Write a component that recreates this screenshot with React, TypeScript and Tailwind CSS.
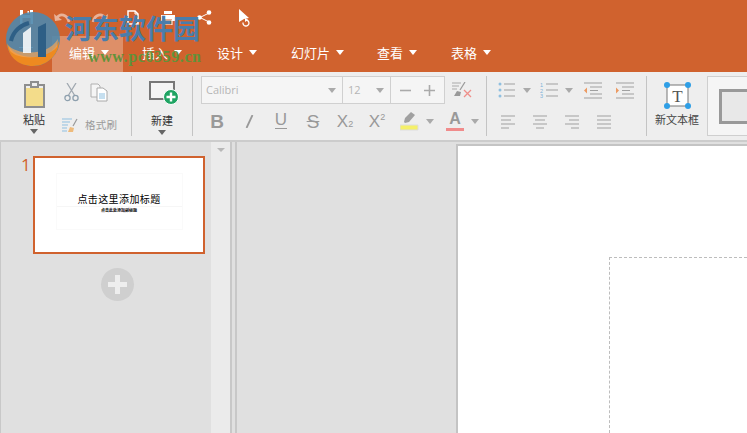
const cjk = "font-['Noto_Sans_CJK_SC','Noto_Sans',sans-serif]";

function Tri({ c = "#fff", w = 8, h = 5, className = "" }: { c?: string; w?: number; h?: number; className?: string }) {
  return (
    <svg width={w} height={h} viewBox="0 0 8 5" className={"block shrink-0 " + className} preserveAspectRatio="none">
      <path d="M0 0H8L4 5Z" fill={c} />
    </svg>
  );
}

function Tab({ label, active = false, w }: { label: string; active?: boolean; w: string }) {
  return (
    <div className={`flex h-[36px] items-center pb-[4px] ${w} ${active ? "bg-[#de8f68]" : ""}`}>
      <span className={`${cjk} text-[13px] leading-none text-white`}>{label}</span>
      <Tri className="ml-[6px]" />
    </div>
  );
}

function Sep() {
  return <div className="my-[4px] h-[60px] w-[1px] shrink-0 bg-[#c4c4c4]" />;
}

function QuickIcons() {
  return (
    <div className="flex h-[36px] items-start pl-[19px] pt-[9px]">
      <svg width="15" height="16" viewBox="0 0 15 16" className="shrink-0"><path d="M1 1h13v14H1z" fill="#fff" /><path d="M4 1h7v5H4z" fill="#d0622e" /><path d="M8.5 2h1.5v3H8.5z" fill="#fff" /><path d="M3.5 9h8v6h-8z" fill="#d0622e" /></svg>
      <svg width="17" height="15" viewBox="0 0 17 15" className="ml-[20px] mt-[3px] shrink-0"><path d="M3 6 C6 1 13 2 15 10" fill="none" stroke="#e9b298" strokeWidth="2.6" /><path d="M0 2 L1 9 L8 8Z" fill="#e9b298" /></svg>
      <svg width="17" height="15" viewBox="0 0 17 15" className="ml-[20px] mt-[3px] shrink-0"><path d="M14 6 C11 1 4 2 2 10" fill="none" stroke="#e9b298" strokeWidth="2.6" /><path d="M17 2 L16 9 L9 8Z" fill="#e9b298" /></svg>
      <svg width="12" height="15" viewBox="0 0 12 15" className="ml-[19px] mt-[1px] shrink-0"><path d="M1 1h7l3 3v10H1z" fill="none" stroke="#fff" strokeWidth="1.5" /><path d="M8 1v3h3" fill="none" stroke="#fff" /></svg>
      <svg width="14" height="14" viewBox="0 0 14 14" className="ml-[22px] mt-[2px] shrink-0"><path d="M3 0h8v3H3z" fill="#fff" /><path d="M0 4h14v6h-3V8H3v2H0z" fill="#fff" /><path d="M3 9h8v5H3z" fill="none" stroke="#fff" /></svg>
      <svg width="15" height="15" viewBox="0 0 15 15" className="ml-[22px] mt-[1px] shrink-0"><path d="M12 3 L3 7.5 L12 12" fill="none" stroke="#fff" /><circle cx="12" cy="2.5" r="2.3" fill="#fff" /><circle cx="2.5" cy="7.5" r="2.3" fill="#fff" /><circle cx="12" cy="12.5" r="2.3" fill="#fff" /></svg>
      <svg width="13" height="19" viewBox="0 0 13 19" className="ml-[26px] shrink-0"><path d="M1 0 L11 9 L6 10 L1 13Z" fill="#fff" /><path d="M5 13.5 a3 3 0 1 0 3-2.5" fill="none" stroke="#fff" strokeWidth="1.3" /><path d="M7 9l3 2-3 2z" fill="#fff" /></svg>
    </div>
  );
}

function ClipboardIcon() {
  return (
    <svg width="21" height="27" viewBox="0 0 21 27"><path d="M1 4h19v22H1z" fill="#f3dc8a" stroke="#8e8e8e" strokeWidth="2" /><path d="M1 4h19v3H1z" fill="#eee" /><path d="M1 4h19v22H1z" fill="none" stroke="#8e8e8e" strokeWidth="2" /><path d="M7 1h7v5H7z" fill="#eee" stroke="#8e8e8e" strokeWidth="2" /></svg>
  );
}

function Lines({ rows, c = "#a0a0a0" }: { rows: [number, number][]; c?: string }) {
  return (
    <svg width="14" height="14" viewBox="0 0 14 14">
      {rows.map((r, i) => <path key={i} d={`M${r[0]} ${i * 4 + 1}H${r[1]}`} stroke={c} strokeWidth="1" />)}
    </svg>
  );
}

function FmtBtn({ children, w = "w-[32px]" }: { children: React.ReactNode; w?: string }) {
  return <div className={`flex h-[20px] ${w} items-center justify-center text-[#999999]`}>{children}</div>;
}

function Toolbar() {
  const sans = "font-['Liberation_Sans',sans-serif]";
  return (
    <div className="flex h-[68px] shrink-0 items-start bg-[#eeeeee]">
      {/* clipboard */}
      <div className="flex h-[68px] w-[131px] shrink-0">
        <div className="ml-[23px] flex w-[22px] flex-col items-center pt-[9px]">
          <ClipboardIcon />
          <span className={`${cjk} mt-[4px] text-[11px] leading-[14px] text-[#333]`}>粘贴</span>
          <Tri c="#666" className="mt-[3px]" />
        </div>
        <div className="ml-[17px] flex flex-col pt-[11px]">
          <div className="flex items-start">
            <svg width="15" height="19" viewBox="0 0 15 19" className="ml-[2px]"><path d="M3 0l8 13M12 0L4 13" stroke="#a0a8b0" strokeWidth="1.3" fill="none" /><circle cx="3.5" cy="15" r="2.6" fill="none" stroke="#8ea0ae" strokeWidth="1.3" /><circle cx="11.5" cy="15" r="2.6" fill="none" stroke="#8ea0ae" strokeWidth="1.3" /></svg>
            <svg width="18" height="19" viewBox="0 0 18 19" className="ml-[11px]"><path d="M1 1h7l2 2v11H1z" fill="#f5f5f5" stroke="#b0b0b0" /><path d="M7 5h6l4 3v10H7z" fill="#fff" stroke="#a8a8a8" /><path d="M9 11h6M9 13h6M9 15h6" stroke="#8cbfe0" /></svg>
          </div>
          <div className="mt-[16px] flex items-center">
            <svg width="17" height="15" viewBox="0 0 17 15"><path d="M0 1h10M0 4h8M0 7h6M0 10h5M0 13h5" stroke="#8fbfe0" /><path d="M15 1L11 8" stroke="#999" strokeWidth="1.2" /><path d="M8 9l4 1-1 4H6z" fill="#eebb7c" /></svg>
            <span className={`${cjk} ml-[6px] text-[10.5px] leading-none tracking-[0.3px] text-[#9a9a9a]`}>格式刷</span>
          </div>
        </div>
      </div>
      <Sep />
      {/* new */}
      <div className="flex h-[68px] w-[60px] shrink-0 flex-col items-center pt-[9px]">
        <svg width="30" height="24" viewBox="0 0 30 24" className="ml-[4px]"><path d="M1 1h24v17H1z" fill="#f4f4f4" stroke="#777" strokeWidth="2" /><circle cx="22" cy="16" r="7.5" fill="#1fa463" stroke="#fff" /><path d="M22 11.5v9M17.5 16h9" stroke="#fff" strokeWidth="2.4" /></svg>
        <span className={`${cjk} mt-[8px] text-[11px] leading-[14px] text-[#333]`}>新建</span>
        <Tri c="#666" className="mt-[3px]" />
      </div>
      <Sep />
      {/* font */}
      <div className="flex h-[68px] w-[293px] shrink-0 flex-col pl-[8px] pt-[4px]">
        <div className="flex items-center">
          <div className="flex h-[28px] w-[244px] border border-[#d0d0d0] bg-[#f5f5f5] text-[11px] text-[#b5b5b5]">
            <div className="flex w-[141px] items-center justify-between border-r border-[#d0d0d0] pl-[4px] pr-[6px] font-['Open_Sans',sans-serif]">
              Calibri<Tri c="#aaa" />
            </div>
            <div className="flex w-[48px] items-center justify-between border-r border-[#d0d0d0] pl-[5px] pr-[6px] font-['Open_Sans',sans-serif]">
              12<Tri c="#aaa" />
            </div>
            <div className="flex flex-1 items-center justify-around px-[3px]">
              <svg width="11" height="11" viewBox="0 0 11 11"><path d="M0 5.5h11" stroke="#aaa" strokeWidth="1.6" /></svg>
              <svg width="11" height="11" viewBox="0 0 11 11"><path d="M0 5.5h11M5.5 0v11" stroke="#aaa" strokeWidth="1.6" /></svg>
            </div>
          </div>
          <svg width="21" height="16" viewBox="0 0 21 16" className="ml-[7px]"><path d="M0 1h9M0 4h7M0 7h5" stroke="#aaa" /><path d="M13 0L8 8" stroke="#999" strokeWidth="1.2" /><path d="M5 9l4 1-1 4H2z" fill="#999" /><path d="M12 8l7 7M19 8l-7 7" stroke="#ef8f8a" strokeWidth="1.3" /></svg>
        </div>
        <div className={`mt-[7px] flex items-center ${sans}`}>
          <FmtBtn><span className="text-[19px] font-bold leading-none">B</span></FmtBtn>
          <FmtBtn><svg width="9" height="13" viewBox="0 0 9 13"><path d="M7.5 0L1.5 13" stroke="#999999" strokeWidth="1.8" /></svg></FmtBtn>
          <FmtBtn><span className="border-b-[1.5px] border-[#999999] pb-[1px] text-[17px] leading-[14px]">U</span></FmtBtn>
          <FmtBtn><span className="text-[19px] leading-none line-through">S</span></FmtBtn>
          <FmtBtn><span className="text-[17px] leading-none">X<span className="text-[9px]">2</span></span></FmtBtn>
          <FmtBtn><span className="flex items-start text-[17px] leading-none">X<span className="text-[9px] leading-[9px]">2</span></span></FmtBtn>
          <div className="ml-[7px] flex h-[20px] items-center">
            <svg width="19" height="20" viewBox="0 0 19 20"><path d="M11 1l4 3-6 7-4 1-1-1 1-4z" fill="#a0a0a0" /><path d="M0 14h18v5H0z" fill="#f5f06a" stroke="#ddd" /></svg>
            <Tri c="#aaa" className="ml-[7px]" />
          </div>
          <div className="ml-[12px] flex h-[20px] items-center">
            <div className="flex w-[18px] flex-col items-center">
              <span className="text-[16px] font-bold leading-[14px] text-[#999999]">A</span>
              <div className="mt-[2px] h-[3px] w-[18px] bg-[#f08c8c]" />
            </div>
            <Tri c="#aaa" className="ml-[7px]" />
          </div>
        </div>
      </div>
      <Sep />
      {/* paragraph */}
      <div className="flex h-[68px] w-[159px] shrink-0 flex-col pl-[11px] pt-[9px]">
        <div className="flex h-[18px] items-center">
          <svg width="18" height="16" viewBox="0 0 18 16"><circle cx="2" cy="2" r="1.5" fill="#8fbfe0" /><circle cx="2" cy="8" r="1.5" fill="#8fbfe0" /><circle cx="2" cy="14" r="1.5" fill="#8fbfe0" /><path d="M6 2h11M6 8h11M6 14h11" stroke="#a0a0a0" /></svg>
          <Tri c="#aaa" className="ml-[7px]" />
          <svg width="18" height="16" viewBox="0 0 18 16" className="ml-[9px]"><path d="M6 2h12M6 8h12M6 14h12" stroke="#a0a0a0" /><text x="0" y="5" fontSize="5.5" fill="#7fb2d8" fontFamily="Liberation Sans">1</text><text x="0" y="10.5" fontSize="5.5" fill="#7fb2d8" fontFamily="Liberation Sans">2</text><text x="0" y="16" fontSize="5.5" fill="#7fb2d8" fontFamily="Liberation Sans">3</text></svg>
          <Tri c="#aaa" className="ml-[7px]" />
          <svg width="18" height="17" viewBox="0 0 18 17" className="ml-[11px]"><path d="M0 1h18M6 5h12M6 8.5h8M6 12h12M0 16h18" stroke="#a0a0a0" /><path d="M0 8.5L3 5.5v6z" fill="#ec9a62" /></svg>
          <svg width="18" height="17" viewBox="0 0 18 17" className="ml-[14px]"><path d="M0 1h18M6 5h12M6 8.5h8M6 12h12M0 16h18" stroke="#a0a0a0" /><path d="M3 8.5L0 5.5v6z" fill="#ec9a62" /></svg>
        </div>
        <div className="mt-[16px] flex items-center gap-[18px] pl-[3px]">
          <Lines rows={[[0, 14], [0, 10], [0, 14], [0, 8]]} />
          <Lines rows={[[0, 14], [2, 12], [0, 14], [3, 11]]} />
          <Lines rows={[[0, 14], [4, 14], [0, 14], [6, 14]]} />
          <Lines rows={[[0, 14], [0, 14], [0, 14], [0, 14]]} />
        </div>
      </div>
      <Sep />
      {/* text box */}
      <div className="flex h-[68px] w-[60px] shrink-0 flex-col items-center pt-[10px]">
        <svg width="27" height="27" viewBox="0 0 27 27"><path d="M3 3h21v21H3z" fill="#fff" stroke="#777" /><circle cx="3" cy="3" r="3" fill="#2f9fe6" /><circle cx="24" cy="3" r="3" fill="#2f9fe6" /><circle cx="3" cy="24" r="3" fill="#2f9fe6" /><circle cx="24" cy="24" r="3" fill="#2f9fe6" /><text x="13.5" y="20" textAnchor="middle" fontSize="17" fill="#555" fontFamily="Liberation Serif">T</text></svg>
        <span className={`${cjk} mt-[3px] whitespace-nowrap text-[11px] leading-[14px] text-[#444]`}>新文本框</span>
      </div>
      {/* theme gallery */}
      <div className="mt-[4px] flex h-[60px] flex-1 items-center justify-end border border-r-0 border-[#cfcfcf] bg-[#f5f5f5]">
        <div className="h-[35px] w-[28px] border-[3px] border-r-0 border-[#999] bg-[#e8e8e8]" />
      </div>
    </div>
  );
}

function Thumb() {
  return (
    <div className="flex h-[98px] w-[172px] flex-col items-center border-2 border-[#d0622e] bg-white">
      <div className="mt-[15px] flex h-[57px] w-[127px] flex-col items-center border border-[#fafafa]">
        <div className="flex h-[33px] w-full items-end justify-center border-b border-[#f6f6f6]">
          <span className={`${cjk} mb-[1px] whitespace-nowrap text-[10px] leading-[13px] tracking-[0.4px] text-black`}>点击这里添加标题</span>
        </div>
        <span className={`${cjk} mt-[1px] whitespace-nowrap text-[4px] font-bold leading-[5px] text-black`}>点击此处添加副标题</span>
      </div>
    </div>
  );
}

function Watermark() {
  return (
    <div className="pointer-events-none absolute left-[5px] top-[11px] flex">
      <svg width="56" height="56" viewBox="0 0 56 56" className="shrink-0">
        <circle cx="28" cy="28" r="27" fill="#4f88ad" fillOpacity="0.9" />
        <path d="M2 32 C8 50 46 52 54 30 C54 44 42 55 28 55 C14 55 3 46 2 32Z" fill="#ee8a20" />
        <path d="M3 34 C12 44 42 46 53 28 L52 36 C42 48 14 50 5 40Z" fill="#f4a558" fillOpacity="0.7" />
        <path d="M18 22 L26 16 L26 42 L18 42Z" fill="#fff" fillOpacity="0.85" />
        <path d="M33 16 L41 12 L41 46 L33 46Z" fill="#2e5f86" />
        <path d="M6 30 C8 20 16 14 24 12" fill="none" stroke="#2e5f86" strokeWidth="4" />
      </svg>
      <div className="ml-[4px] flex flex-col">
        <span className={`${cjk} whitespace-nowrap text-[27px] font-bold leading-[34px] text-[#4a7dab]`}>河东软件园</span>
        <span className="ml-[23px] mt-[2px] whitespace-nowrap font-['Liberation_Serif',serif] text-[16px] font-bold leading-[20px] tracking-[0.6px] text-[#62923a]">www.pc0359.cn</span>
      </div>
    </div>
  );
}

export default function App() {
  return (
    <div className="relative flex h-[433px] w-[747px] flex-col overflow-hidden bg-[#e0e0e0]">
      <div className="h-[72px] shrink-0 bg-[#d0622e]">
        <QuickIcons />
        <div className="flex h-[36px] items-center">
          <div className="flex h-[36px] w-[52px] items-center pb-[4px] pl-[19px]">
            <div className="flex w-[14px] flex-col gap-[4px]">
              <div className="h-[1px] bg-white" /><div className="h-[1px] bg-white" /><div className="h-[1px] bg-white" />
            </div>
          </div>
          <Tab label="编辑" active w="w-[71px] pl-[17px]" />
          <Tab label="插入" w="w-[75px] pl-[19px]" />
          <Tab label="设计" w="w-[73px] pl-[19px]" />
          <Tab label="幻灯片" w="w-[87px] pl-[20px]" />
          <Tab label="查看" w="w-[74px] pl-[19px]" />
          <Tab label="表格" w="w-[70px] pl-[19px]" />
        </div>
      </div>
      <Toolbar />
      <div className="h-[2px] shrink-0 bg-[#cccccc]" />
      <div className="flex min-h-0 flex-1">
        <div className="flex w-[232px] shrink-0 border-r-2 border-[#c8c8c8]">
          <div className="flex w-[211px] flex-col border-l border-[#c8c8c8]">
            <div className="mt-[14px] flex">
              <span className="ml-[20px] w-[12px] font-['Open_Sans',sans-serif] text-[17px] leading-[18px] text-[#d0622e]">1</span>
              <Thumb />
            </div>
            <div className="ml-[100px] mt-[14px] flex h-[33px] w-[33px] items-center justify-center rounded-full bg-[#cfcfcf]">
              <svg width="19" height="19" viewBox="0 0 19 19"><path d="M7 0h5v7h7v5h-7v7H7v-7H0V7h7z" fill="#eeeeee" /></svg>
            </div>
          </div>
          <div className="flex flex-1 justify-center bg-[#ebebeb] pt-[6px]">
            <Tri c="#b8b8b8" h={4} />
          </div>
        </div>
        <div className="ml-[3px] flex-1 border-l-2 border-[#c8c8c8] pl-[219px] pt-[2px]">
          <div className="h-full border-l-2 border-t-2 border-[#c4c4c4] bg-white pl-[151px] pt-[111px]">
            <div className="h-full border-l border-t border-dashed border-[#bdbdbd]" />
          </div>
        </div>
      </div>
      <Watermark />
    </div>
  );
}
